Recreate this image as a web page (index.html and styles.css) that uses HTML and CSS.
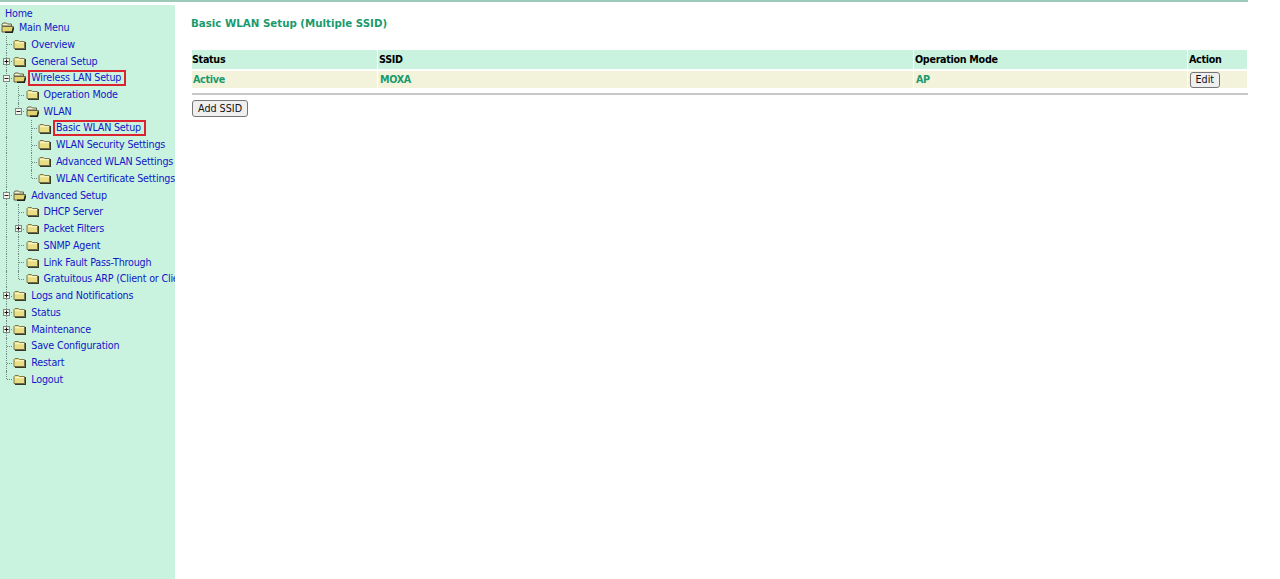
FILE: index.html
```html
<!DOCTYPE html>
<html lang="en">
<head>
<meta charset="utf-8">
<title>Basic WLAN Setup</title>
<link rel="stylesheet" href="styles.css">
</head>
<body>
<svg class="defs" width="0" height="0" aria-hidden="true">
  <symbol id="closed" viewBox="0 0 13 11">
    <path d="M1 2.5 L2 1.5 H5.5 L6.5 2.5 H11.5 V9.5 H1 Z" fill="#e9de84" stroke="#7d7a50" stroke-width="1"/>
    <path d="M2 3.7 H11" stroke="#fbf8d0" stroke-width="1"/>
    <path d="M12.5 3 V10.3 H2" fill="none" stroke="#3a3a28" stroke-width="1.2"/>
  </symbol>
  <symbol id="open" viewBox="0 0 13 11">
    <path d="M1 2.5 L2 1 H5.5 L6.5 2 H10.5 V4 H1 Z" fill="#f4f0d0" stroke="#66634a" stroke-width="1"/>
    <path d="M1 4.5 H12.5 L11 10 H1 Z" fill="#e2d46e" stroke="#66634a" stroke-width="1"/>
    <path d="M4 10.3 H11.3 L12.6 5.5" fill="none" stroke="#22221a" stroke-width="1.5"/>
  </symbol>
  <symbol id="plus" viewBox="0 0 7 7">
    <rect x=".5" y=".5" width="6" height="6" fill="#f4f4ec" stroke="#7c8a84"/>
    <path d="M1.5 3.5 H5.5 M3.5 1.5 V5.5" stroke="#111"/>
  </symbol>
  <symbol id="minus" viewBox="0 0 7 7">
    <rect x=".5" y=".5" width="6" height="6" fill="#f4f4ec" stroke="#7c8a84"/>
    <path d="M1.5 3.5 H5.5" stroke="#222"/>
  </symbol>
</svg>
<div class="top-line"></div>
<div class="layout">
  <nav class="tree">
    <div class="row home"><a>Home</a></div>
    <div class="row"><span class="fold"><svg><use href="#open"/></svg></span><a>Main Menu</a></div>

    <div class="row"><i class="c tee"></i><span class="fold"><svg><use href="#closed"/></svg></span><a>Overview</a></div>
    <div class="row"><i class="c tee"><svg class="box"><use href="#plus"/></svg></i><span class="fold"><svg><use href="#closed"/></svg></span><a>General Setup</a></div>
    <div class="row"><i class="c tee"><svg class="box"><use href="#minus"/></svg></i><span class="fold"><svg><use href="#open"/></svg></span><a class="sel">Wireless LAN Setup</a></div>

    <div class="row"><i class="c v"></i><i class="c tee"></i><span class="fold"><svg><use href="#closed"/></svg></span><a>Operation Mode</a></div>
    <div class="row"><i class="c v"></i><i class="c end"><svg class="box"><use href="#minus"/></svg></i><span class="fold"><svg><use href="#open"/></svg></span><a>WLAN</a></div>

    <div class="row"><i class="c v"></i><i class="c"></i><i class="c tee"></i><span class="fold"><svg><use href="#closed"/></svg></span><a class="sel">Basic WLAN Setup</a></div>
    <div class="row"><i class="c v"></i><i class="c"></i><i class="c tee"></i><span class="fold"><svg><use href="#closed"/></svg></span><a>WLAN Security Settings</a></div>
    <div class="row"><i class="c v"></i><i class="c"></i><i class="c tee"></i><span class="fold"><svg><use href="#closed"/></svg></span><a>Advanced WLAN Settings</a></div>
    <div class="row"><i class="c v"></i><i class="c"></i><i class="c end"></i><span class="fold"><svg><use href="#closed"/></svg></span><a>WLAN Certificate Settings</a></div>

    <div class="row"><i class="c tee"><svg class="box"><use href="#minus"/></svg></i><span class="fold"><svg><use href="#open"/></svg></span><a>Advanced Setup</a></div>
    <div class="row"><i class="c v"></i><i class="c tee"></i><span class="fold"><svg><use href="#closed"/></svg></span><a>DHCP Server</a></div>
    <div class="row"><i class="c v"></i><i class="c tee"><svg class="box"><use href="#plus"/></svg></i><span class="fold"><svg><use href="#closed"/></svg></span><a>Packet Filters</a></div>
    <div class="row"><i class="c v"></i><i class="c tee"></i><span class="fold"><svg><use href="#closed"/></svg></span><a>SNMP Agent</a></div>
    <div class="row"><i class="c v"></i><i class="c tee"></i><span class="fold"><svg><use href="#closed"/></svg></span><a>Link Fault Pass-Through</a></div>
    <div class="row"><i class="c v"></i><i class="c end"></i><span class="fold"><svg><use href="#closed"/></svg></span><a>Gratuitous ARP (Client or Client Router)</a></div>

    <div class="row"><i class="c tee"><svg class="box"><use href="#plus"/></svg></i><span class="fold"><svg><use href="#closed"/></svg></span><a>Logs and Notifications</a></div>
    <div class="row"><i class="c tee"><svg class="box"><use href="#plus"/></svg></i><span class="fold"><svg><use href="#closed"/></svg></span><a>Status</a></div>
    <div class="row"><i class="c tee"><svg class="box"><use href="#plus"/></svg></i><span class="fold"><svg><use href="#closed"/></svg></span><a>Maintenance</a></div>
    <div class="row"><i class="c tee"></i><span class="fold"><svg><use href="#closed"/></svg></span><a>Save Configuration</a></div>
    <div class="row"><i class="c tee"></i><span class="fold"><svg><use href="#closed"/></svg></span><a>Restart</a></div>
    <div class="row"><i class="c end"></i><span class="fold"><svg><use href="#closed"/></svg></span><a>Logout</a></div>
  </nav>
  <main class="content">
    <h1>Basic WLAN Setup (Multiple SSID)</h1>
    <table class="ssid">
      <thead>
        <tr><th class="w1">Status</th><th class="w2">SSID</th><th class="w3">Operation Mode</th><th>Action</th></tr>
      </thead>
      <tbody>
        <tr><td>Active</td><td>MOXA</td><td>AP</td><td><button type="button" class="btn edit">Edit</button></td></tr>
      </tbody>
    </table>
    <hr class="rule">
    <button type="button" class="btn">Add SSID</button>
  </main>
</div>
</body>
</html>
```

FILE: styles.css
```css
* { box-sizing: border-box; }
html, body { margin: 0; height: 100%; overflow: hidden; background: #fff; }
body { font-family: "DejaVu Sans", Verdana, sans-serif; font-size: 9.6px; letter-spacing: -.2px; }
.defs { position: absolute; }

.top-line { width: 1248px; height: 2px; background: #9cc9b8; }
.layout { display: flex; height: 577px; width: 1248px; padding-top: 3px; }

.tree { width: 175px; flex: none; background: #caf3df; overflow: hidden; padding-top: 2.7px; }
.row { display: flex; align-items: center; height: 16.76px; white-space: nowrap; }
.row a { color: #1216c8; line-height: 13px; }
.home { padding-left: 5px; height: 11.6px; }
.fold { width: 19px; flex: none; display: flex; align-items: center; padding-left: 1px; }
.fold svg { width: 13px; height: 11px; display: block; }
.c { position: relative; width: 12.3px; height: 100%; flex: none; display: block; }
.v::before, .tee::before, .end::before {
  content: ""; position: absolute; left: 6px; top: 0; bottom: 0; border-left: 1px dotted #6f8a80;
}
.end::before { bottom: 50%; }
.tee::after, .end::after {
  content: ""; position: absolute; left: 7px; width: 5px; top: 50%; border-top: 1px dotted #6f8a80;
}
.box { position: absolute; left: 3px; top: 5px; width: 7px; height: 7px; z-index: 1; }
.row a.sel { padding-right: 2px; line-height: 10px; outline: 2px solid #dc2330; outline-offset: 1px; }

.content { flex: 1; padding: 0 0 0 16px; min-width: 0; }
h1 { margin: 12px 0 0 0; font-size: 10.25px; line-height: 13px; font-weight: bold; color: #1a9a6c; letter-spacing: 0; }
.ssid { width: 1056px; margin: 20px 0 0 1px; border-collapse: separate; border-spacing: 0; table-layout: fixed; }
.ssid th { height: 19px; padding: 0 0 0 1px; background: #caf3df; color: #000; text-align: left; font-size: 9.6px; letter-spacing: -.3px; border-right: 1px solid #fff; }
.ssid td { height: 19px; padding: 0 0 0 2px; background: #f3f3dc; color: #1a9a6c; font-weight: bold; letter-spacing: -.3px; border-top: 2px solid #fff; border-right: 1px solid #fff; }
.ssid th:first-child { padding-left: 0; }
.ssid td:first-child { padding-left: 1px; }
.w1 { width: 186px; }
.w2 { width: 536px; }
.w3 { width: 274px; }
.rule { width: 1056px; height: 2px; margin: 5px 0 5px 1px; border: 0; background: #c8c8c8; }
.btn { display: block; font: 9.6px "DejaVu Sans", Verdana, sans-serif; height: 17px; padding: 0 5px; margin: 0 0 0 1px; color: #111; background: #efefef; border: 1px solid #767676; border-radius: 3px; }
.edit { height: 16px; padding: 0 4.5px; margin: 0; }
```
